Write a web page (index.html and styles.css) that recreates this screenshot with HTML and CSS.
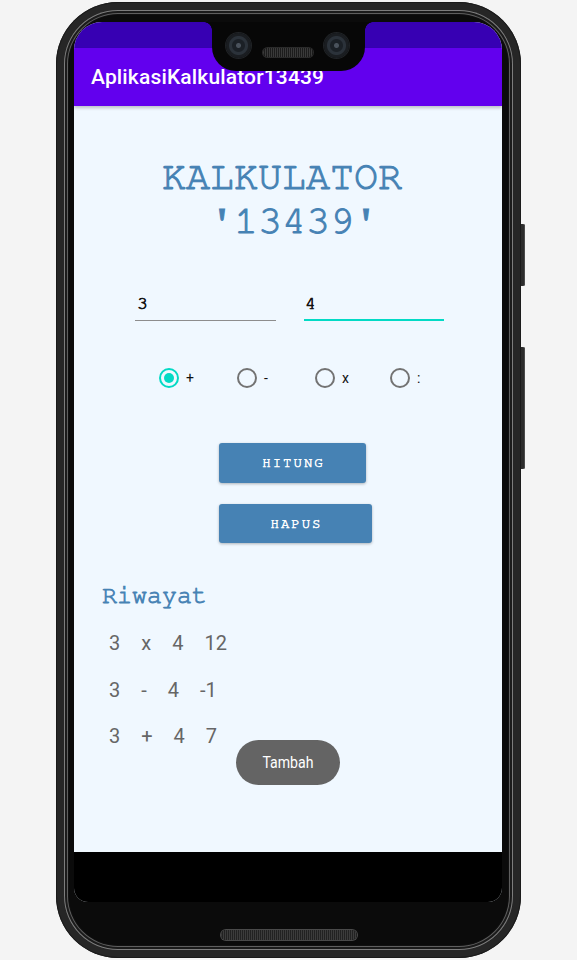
FILE: index.html
```html
<!DOCTYPE html>
<html lang="id">
<head>
<meta charset="utf-8">
<title>AplikasiKalkulator13439</title>
<link rel="stylesheet" href="styles.css">
</head>
<body>
<div class="stage">
  <div class="phone">
    <span class="side-btn side-btn-power"></span>
    <span class="side-btn side-btn-volume"></span>
    <div class="phone-body">
      <div class="screen">
        <div class="notch">
          <span class="camera camera-left"></span>
          <span class="earpiece"></span>
          <span class="camera camera-right"></span>
        </div>
        <div class="status-bar"></div>
        <header class="app-bar">AplikasiKalkulator13439</header>
        <main class="content">
          <h1 class="title">KALKULATOR
 '13439'</h1>
          <div class="inputs">
            <div class="field">3</div>
            <div class="field field-focused">4</div>
          </div>
          <div class="radios">
            <label class="radio radio-checked"><span class="radio-circle"></span><span class="radio-label">+</span></label>
            <label class="radio"><span class="radio-circle"></span><span class="radio-label">-</span></label>
            <label class="radio"><span class="radio-circle"></span><span class="radio-label">x</span></label>
            <label class="radio"><span class="radio-circle"></span><span class="radio-label">:</span></label>
          </div>
          <div class="actions">
            <button class="btn btn-hitung">HITUNG</button>
            <button class="btn btn-hapus">HAPUS</button>
          </div>
          <h2 class="history-title">Riwayat</h2>
          <ul class="history">
            <li class="history-row"><span>3</span><span>x</span><span>4</span><span>12</span></li>
            <li class="history-row"><span>3</span><span>-</span><span>4</span><span>-1</span></li>
            <li class="history-row"><span>3</span><span>+</span><span>4</span><span>7</span></li>
          </ul>
          <div class="toast"><span>Tambah</span></div>
        </main>
        <div class="nav-bar"></div>
      </div>
      <div class="speaker"></div>
    </div>
  </div>
</div>
</body>
</html>
```
FILE: styles.css
```css
* { box-sizing: border-box; }

html, body {
  margin: 0;
  padding: 0;
}

body {
  width: 577px;
  height: 960px;
  overflow: hidden;
  background: #f4f4f4;
  font-family: Roboto, "Liberation Sans", sans-serif;
}

.stage {
  padding: 2px 0 0 56px;
}

.phone {
  position: relative;
  width: 465px;
  height: 956px;
  border-radius: 62px;
  background: #262626;
  padding: 8px;
  box-shadow: inset 0 0 0 1px #1a1a1a;
}

.side-btn {
  position: absolute;
  left: 465px;
  width: 4px;
  background: #2c2c2c;
  border-radius: 0 2px 2px 0;
  box-shadow: inset -1px 0 0 #4a4a4a;
}
.side-btn-power { top: 222px; height: 62px; }
.side-btn-volume { top: 345px; height: 122px; }

.phone-body {
  height: 100%;
  border-radius: 54px;
  background: #0b0b0b;
  padding: 12px 0 0 10px;
  box-shadow: inset 0 0 0 1px #7d7d7d, inset 0 0 0 3px #1b1b1b, inset 0 0 0 4px #5f5f5f, inset 0 0 0 5px #111;
  display: flex;
  flex-direction: column;
  align-items: flex-start;
}

.screen {
  position: relative;
  width: 428px;
  height: 880px;
  border-radius: 28px 28px 14px 14px;
  overflow: hidden;
  display: flex;
  flex-direction: column;
  background: #f0f8ff;
}

/* notch */
.notch {
  position: absolute;
  top: 0;
  left: 138px;
  width: 153px;
  height: 49px;
  background: #070707;
  border-radius: 0 0 24px 24px;
  z-index: 5;
}
.notch::before,
.notch::after {
  content: "";
  position: absolute;
  top: 0;
  width: 8px;
  height: 8px;
}
.notch::before {
  left: -8px;
  background: radial-gradient(circle at 0 100%, transparent 7.5px, #070707 8px);
}
.notch::after {
  right: -8px;
  background: radial-gradient(circle at 100% 100%, transparent 7.5px, #070707 8px);
}
.camera {
  position: absolute;
  top: 11px;
  width: 25px;
  height: 25px;
  border-radius: 50%;
  background: radial-gradient(circle at 50% 50%, #4a525c 0 2px, #1b2026 3px 6px, #2b323a 7px 9px, #1a1d21 10px);
  box-shadow: 0 0 0 1px #202326;
}
.camera-left { left: 14px; }
.camera-right { left: 112px; }
.earpiece {
  position: absolute;
  top: 26px;
  left: 51px;
  width: 50px;
  height: 9px;
  border-radius: 5px;
  background: repeating-linear-gradient(90deg, #3a3a3a 0 1px, #1c1c1c 1px 2px);
  box-shadow: 0 0 0 1px #2a2a2a;
}

.status-bar {
  height: 26px;
  flex: none;
  background: #3700b3;
}

.app-bar {
  position: relative;
  z-index: 2;
  height: 58px;
  flex: none;
  background: #6200ee;
  color: #fff;
  font-family: Roboto, "Liberation Sans", sans-serif;
  font-weight: 500;
  font-size: 21px;
  letter-spacing: 0.15px;
  line-height: 24px;
  padding: 17px 0 0 17px;
  box-shadow: 0 2px 3px rgba(0, 0, 0, 0.22);
}

.content {
  position: relative;
  flex: 1;
  background: #f0f8ff;
  display: flex;
  flex-direction: column;
}

.title {
  margin: 49px 12px 0 0;
  font-family: "Nimbus Mono PS", "Nimbus Mono L", "FreeMono", "Liberation Mono", monospace;
  font-weight: normal;
  font-size: 40px;
  line-height: 44px;
  color: #4682b4;
  -webkit-text-stroke: 1px #4682b4;
  text-align: center;
  white-space: pre;
}

.inputs {
  margin-top: 50px;
  display: flex;
  justify-content: center;
  gap: 28px;
  padding-left: 3px;
}

.field {
  width: 141px;
  height: 28px;
  padding: 0 2px;
  font-family: "Nimbus Mono PS", "Nimbus Mono L", "FreeMono", "Liberation Mono", monospace;
  font-size: 18px;
  line-height: 22px;
  color: #111;
  -webkit-text-stroke: 0.7px #111;
  border-bottom: 1px solid #8d8d8d;
}
.field-focused {
  width: 140px;
  padding-left: 1px;
  border-bottom: 2px solid #03dac5;
}

.radios {
  margin-top: 47px;
  display: grid;
  grid-template-columns: 78px 78px 75px 40px;
  padding-left: 85px;
  align-items: center;
}

.radio {
  display: flex;
  align-items: center;
  gap: 7px;
  height: 20px;
}
.radio-circle {
  position: relative;
  width: 20px;
  height: 20px;
  border-radius: 50%;
  border: 2px solid #737373;
  flex: none;
}
.radio-checked .radio-circle {
  border-color: #03dac5;
}
.radio-checked .radio-circle::after {
  content: "";
  position: absolute;
  left: 3px;
  top: 3px;
  width: 10px;
  height: 10px;
  border-radius: 50%;
  background: #03dac5;
}
.radio-label {
  font-family: Roboto, "Liberation Sans", sans-serif;
  font-size: 14px;
  line-height: 20px;
  color: #111;
}

.actions {
  margin-top: 55px;
  padding-left: 145px;
  display: flex;
  flex-direction: column;
  align-items: flex-start;
  gap: 21px;
}

.btn {
  border: none;
  border-radius: 3px;
  background: #4682b4;
  color: #fff;
  font-family: "Nimbus Mono PS", "Nimbus Mono L", "FreeMono", "Liberation Mono", monospace;
  font-size: 14px;
  letter-spacing: 2px;
  -webkit-text-stroke: 0.5px #fff;
  padding: 0 0 0 2px;
  box-shadow: 0 1px 3px rgba(0, 0, 0, 0.28);
}
.btn-hitung { width: 147px; height: 40px; }
.btn-hapus { width: 153px; height: 39px; }

.history-title {
  margin: 38px 0 0 28px;
  font-family: "Nimbus Mono PS", "Nimbus Mono L", "FreeMono", "Liberation Mono", monospace;
  font-weight: normal;
  font-size: 25px;
  line-height: 30px;
  color: #4682b4;
  -webkit-text-stroke: 0.8px #4682b4;
}

.history {
  list-style: none;
  margin: 9px 0 0;
  padding: 0 0 0 35px;
}
.history-row {
  display: flex;
  gap: 21px;
  font-family: Roboto, "Liberation Sans", sans-serif;
  font-size: 20px;
  line-height: 46.5px;
  color: #666;
}

.toast {
  position: absolute;
  left: 162px;
  top: 634px;
  width: 104px;
  height: 45px;
  border-radius: 23px;
  background: #646464;
  color: #fff;
  display: flex;
  align-items: center;
  justify-content: center;
  font-family: Roboto, "Liberation Sans", sans-serif;
  font-size: 16px;
}
.toast span {
  display: inline-block;
  transform: scaleX(0.88);
}

.nav-bar {
  height: 50px;
  flex: none;
  background: #000;
}

.speaker {
  align-self: center;
  margin: 28px 10px 0 0;
  width: 136px;
  height: 10px;
  border-radius: 5px;
  background: repeating-linear-gradient(90deg, #3c3c3c 0 1px, #222 1px 2px);
  box-shadow: 0 0 0 1px #4a4a4a;
}
```
